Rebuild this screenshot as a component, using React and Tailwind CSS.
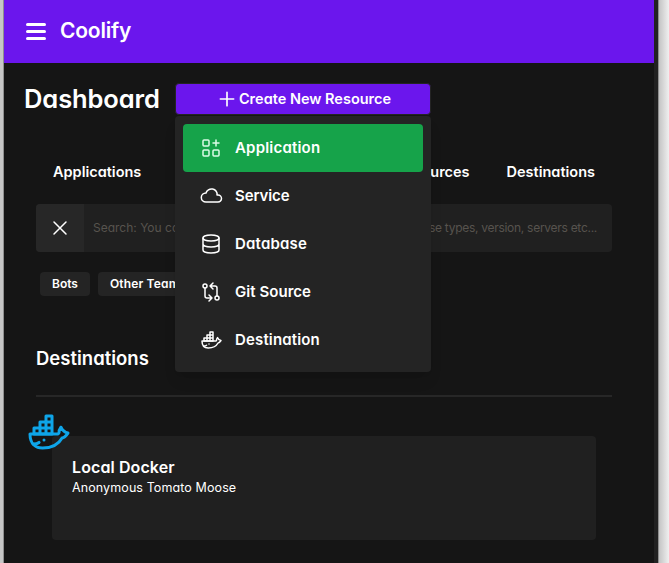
import React from "react";

function Icon({ className, width = 1.5, children }) {
  return (
    <svg viewBox="0 0 24 24" className={className} fill="none" stroke="currentColor" strokeWidth={width} strokeLinecap="round" strokeLinejoin="round">
      {children}
    </svg>
  );
}

function Docker({ className }) {
  return (
    <Icon className={className}>
      <path d="M22 12.54c-1.804 -.345 -2.701 -1.08 -3.523 -2.94c-.487 .696 -1.102 1.568 -.92 2.4c.028 .238 -.32 1.002 -.557 1h-14c0 5.208 3.164 7 6.196 7c4.124 .022 7.828 -1.376 9.854 -5c1.146 -.101 2.296 -1.505 2.95 -2.46z" />
      <path d="M5 10h3v3h-3zM8 10h3v3h-3zM11 10h3v3h-3zM8 7h3v3h-3zM11 7h3v3h-3zM11 4h3v3h-3z" />
      <path d="M4.571 18c1.5 0 2.047 -.074 2.958 -.78M10 16v.01" />
    </Icon>
  );
}

const menu = [
  {
    label: "Application",
    tracking: "tracking-[0.2px]",
    icon: (
      <Icon className="size-6">
        <rect x="4" y="4" width="6" height="6" rx="1" />
        <rect x="4" y="14" width="6" height="6" rx="1" />
        <rect x="14" y="14" width="6" height="6" rx="1" />
        <path d="M14 7h6M17 4v6" />
      </Icon>
    ),
  },
  {
    label: "Service",
    tracking: "tracking-[-0.1px]",
    icon: (
      <Icon className="size-6">
        <path d="M7 18a4.6 4.4 0 0 1 0 -9a5 4.5 0 0 1 11 2h1a3.5 3.5 0 0 1 0 7h-12" />
      </Icon>
    ),
  },
  {
    label: "Database",
    tracking: "tracking-[0.2px]",
    icon: (
      <Icon className="size-6">
        <ellipse cx="12" cy="6" rx="8" ry="3" />
        <path d="M4 6v6a8 3 0 0 0 16 0v-6M4 12v6a8 3 0 0 0 16 0v-6" />
      </Icon>
    ),
  },
  {
    label: "Git Source",
    tracking: "tracking-[0.05px]",
    icon: (
      <Icon className="size-6">
        <circle cx="6" cy="6" r="2" />
        <circle cx="18" cy="18" r="2" />
        <path d="M11 6h5a2 2 0 0 1 2 2v8M14 9l-3 -3l3 -3M13 18h-5a2 2 0 0 1 -2 -2v-8M10 15l3 3l-3 3" />
      </Icon>
    ),
  },
  { label: "Destination", tracking: "tracking-[0.15px]", icon: <Docker className="size-6" /> },
];

function CreateMenu() {
  return (
    <div className="relative ml-4 w-64">
      <button className="flex h-8 w-full items-center justify-center gap-0.5 rounded border border-[#242424] bg-[#6b16ed] pl-0.5 text-[14.5px] font-semibold">
        <Icon className="size-5" width={2}>
          <path d="M12 4v16M4 12h16" />
        </Icon>
        <span className="whitespace-nowrap">Create New Resource</span>
      </button>
      <div className="absolute top-[33px] left-0 z-10 h-64 w-64 rounded bg-[#242424] p-2 shadow-lg">
        {menu.map((m, i) => (
          <div key={m.label} className={`flex h-12 items-center rounded pl-4 text-[15px] font-semibold ${i === 0 ? "bg-[#16a34a]" : ""}`}>
            <span className={`mr-3 ${i === 0 ? "text-green-100" : ""}`}>{m.icon}</span>
            <span className={m.tracking}>{m.label}</span>
          </div>
        ))}
      </div>
    </div>
  );
}

export default function App() {
  return (
    <div className="flex h-[563px] w-[669px] overflow-hidden bg-[#e8e8e8] font-['Inter',sans-serif] text-white [font-feature-settings:'cv11']">
      <div className="w-1 shrink-0 border-r border-[#8f8f8f] bg-[#c6c6c6]" />
      <div className="w-[650px] shrink-0 bg-[#151515]">
        <header className="flex h-[63px] items-center bg-[#6b16ed] pl-[22px]">
          <div className="flex w-5 flex-col gap-1">
            <i className="h-[3px] rounded-full bg-white" />
            <i className="h-[3px] rounded-full bg-white" />
            <i className="h-[3px] rounded-full bg-white" />
          </div>
          <span className="ml-3.5 pb-0.5 text-[21px] font-semibold tracking-[-0.2px]">Coolify</span>
        </header>

        <div className="mt-5 flex h-8 items-center pl-5">
          <h1 className="w-[135px] whitespace-nowrap text-[25.5px] font-semibold tracking-[-0.1px]">Dashboard</h1>
          <CreateMenu />
        </div>

        <nav className="mt-[45px] flex h-6 items-center justify-between pr-[59px] pl-[49px] text-[14.5px] font-semibold tracking-[0px]">
          <span>Applications</span>
          <div className="flex gap-[37px]">
            <span>Git Sources</span>
            <span>Destinations</span>
          </div>
        </nav>

        <div className="mt-5 ml-8 flex h-12 w-[576px] items-center overflow-hidden rounded bg-[#202020]">
          <div className="flex size-12 shrink-0 items-center justify-center bg-[#272727]">
            <Icon className="size-6">
              <path d="M18 6L6 18M6 6l12 12" />
            </Icon>
          </div>
          <div className="flex flex-1 justify-between pr-[15px] pl-[9px] text-xs text-[#57534e]">
            <span>Search: You can search</span>
            <span className="tracking-[-0.28px]">database types, version, servers etc...</span>
          </div>
        </div>

        <div className="mt-5 ml-9 flex gap-2 text-xs font-semibold">
          <span className="flex h-6 w-[50px] items-center justify-center rounded bg-[#242424]">Bots</span>
          <span className="flex h-6 items-center rounded bg-[#242424] px-3 tracking-[0.15px]">Other Teams</span>
        </div>

        <h2 className="mt-12 ml-8 h-7 text-[18.5px] leading-7 font-semibold">Destinations</h2>
        <div className="mt-[23px] ml-8 h-0.5 w-[576px] bg-[#272727]" />

        <div className="relative mt-[39px] ml-12 h-[104px] w-[544px] rounded bg-[#202020] px-5 pt-[19px]">
          <Docker className="absolute -top-7 -left-7 size-12 text-[#0ea5e9]" />
          <div className="mb-px text-base leading-6 font-semibold tracking-[0.1px]">Local Docker</div>
          <div className="text-[12.5px] leading-4 tracking-[0.1px]">Anonymous Tomato Moose</div>
        </div>
      </div>
      <div className="w-1 shrink-0 bg-[#222]" />
      <div className="w-px shrink-0 bg-[#8f8f8f]" />
      <div className="flex-1 bg-linear-to-r from-[#c4c4c4] to-[#f0f0f0]" />
    </div>
  );
}
